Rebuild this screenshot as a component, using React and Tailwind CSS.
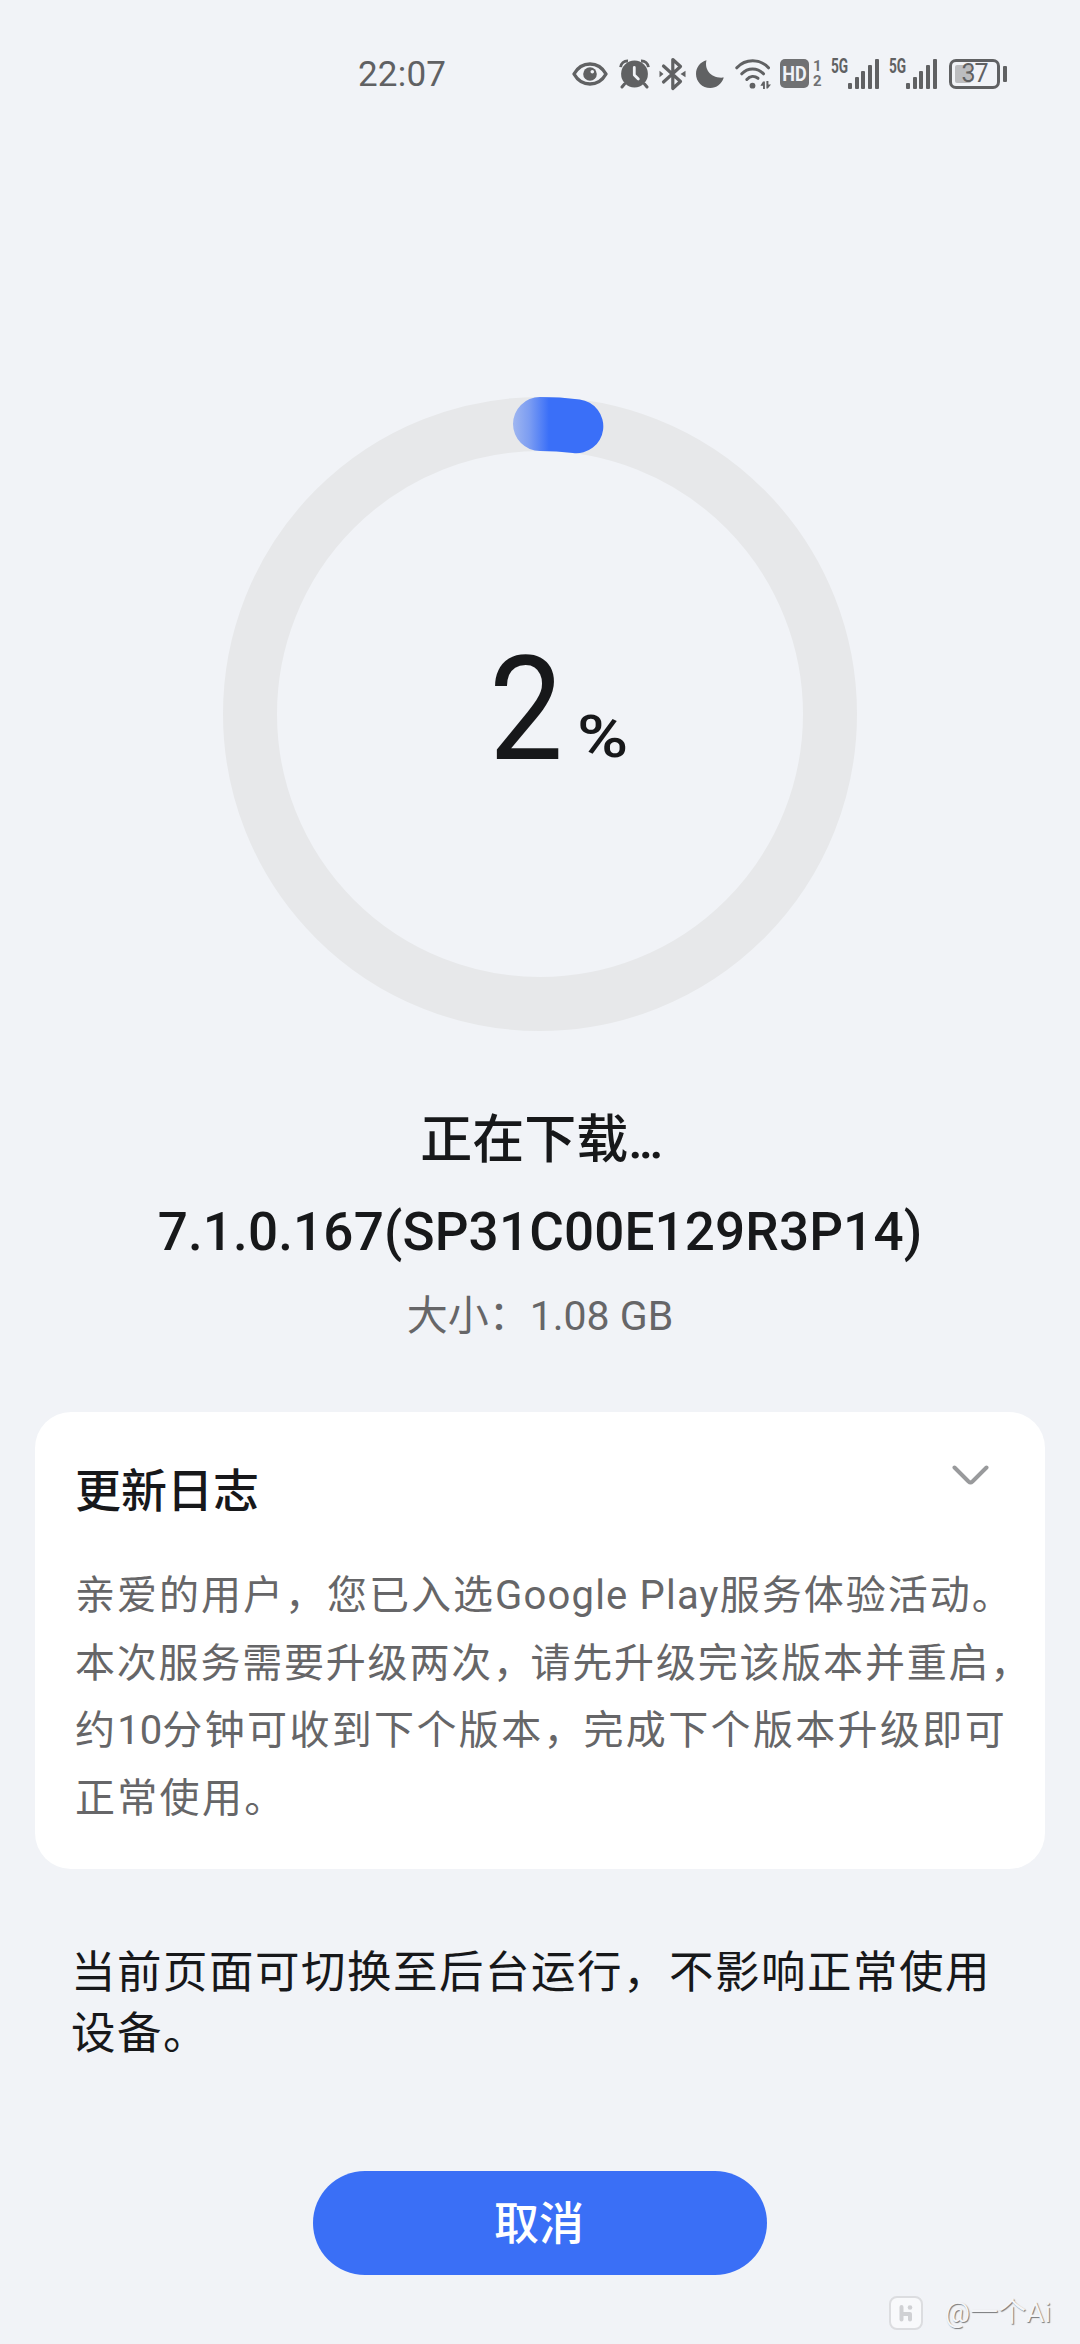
import React from 'react';

const RADIUS = 290;
const CIRCUMFERENCE = 2 * Math.PI * RADIUS;

const EyeIcon = () => (
  <svg className="w-9 h-6" viewBox="0 0 36 24" fill="none">
    <path d="M2 12C6 5 12 2 18 2s12 3 16 10c-4 7-10 10-16 10S6 19 2 12z" stroke="#606163" strokeWidth="3.4" strokeLinejoin="round" />
    <circle cx="18" cy="12" r="6.8" fill="#606163" />
    <circle cx="20.3" cy="9.8" r="1.8" fill="#f1f3f7" />
  </svg>
);

const AlarmIcon = () => (
  <svg className="w-[31px] h-[30px]" viewBox="0 0 31 30" fill="none">
    <circle cx="15.5" cy="15" r="13.4" fill="#606163" />
    <path d="M1.6 8.2C2 4.5 5 1.8 9 2M29.4 8.2C29 4.5 26 1.8 22 2" stroke="#606163" strokeWidth="2.8" />
    <path d="M5.5 25L3 28M25.5 25L28 28" stroke="#606163" strokeWidth="3" strokeLinecap="round" />
    <path d="M15.3 8.5v7.5l4 4" stroke="#f1f3f7" strokeWidth="2.8" strokeLinecap="round" strokeLinejoin="round" />
  </svg>
);

const BluetoothIcon = () => (
  <svg className="w-[27px] h-[34px]" viewBox="0 0 27 34" fill="none">
    <path d="M4.5 9L21.5 24.5L13.8 31.5V2.5L21.5 9.5L4.5 25" stroke="#606163" strokeWidth="3.2" strokeLinecap="round" strokeLinejoin="round" />
    <path d="M.5 13.8v6.4L4.5 17zM26.5 13.8v6.4L21.5 17z" fill="#606163" />
  </svg>
);

const MoonIcon = () => (
  <svg className="w-7 h-7" viewBox="0 0 28 28">
    <path d="M10.5 0.3C8.2 9 14.5 19 27.8 17.6C25.5 24.5 20.5 28 14.3 28C6.2 28 0 21.8 0 14C0 7.5 4.2 2 10.5 0.3z" fill="#606163" />
  </svg>
);

const WifiIcon = () => (
  <svg className="w-9 h-[30px]" viewBox="0 0 36 30" fill="none">
    <g stroke="#606163" strokeWidth="3" strokeLinecap="round">
      <path d="M1.8 8.8C10.5 -0.5 25 -0.5 33.5 8.8" />
      <path d="M6.8 14.8C12.8 8.3 22.5 8.3 28.5 14.8" />
      <path d="M11.8 20.5C15 16.8 19.5 16.6 23 19.3" />
    </g>
    <circle cx="17.5" cy="26.7" r="2.9" fill="#606163" />
    <path d="M28 22.5h1.9V30H28v-3.2h-2.6zM31.4 22v7.5h1.4L36 25.4h-2.6V22z" fill="#606163" />
  </svg>
);

const SignalIcon = () => (
  <div className="flex items-end gap-[2.8px] h-[30px]">
    <span className="w-1 h-[6px] rounded-[1px] bg-[#606163]" />
    <span className="w-1 h-[12px] rounded-[1px] bg-[#606163]" />
    <span className="w-1 h-[18px] rounded-[1px] bg-[#606163]" />
    <span className="w-1 h-[24px] rounded-[1px] bg-[#606163]" />
    <span className="w-1 h-[30px] rounded-[1px] bg-[#606163]" />
  </div>
);

const Cellular = () => (
  <div className="flex w-[48px] h-[30px] justify-between">
    <span className="w-[16px] h-4 text-[19.5px] leading-[16px] font-bold origin-left scale-x-[0.7]">5G</span>
    <SignalIcon />
  </div>
);

const StatusBar = () => (
  <header className="flex items-center h-[147px] pl-[358px] text-[#606163]">
    <span className="w-[214px] pt-[2px] text-[35px] leading-none tracking-[0.2px]">22:07</span>
    <EyeIcon />
    <div className="ml-[11px]"><AlarmIcon /></div>
    <div className="ml-[9px]"><BluetoothIcon /></div>
    <div className="ml-[10px]"><MoonIcon /></div>
    <div className="ml-[11px]"><WifiIcon /></div>
    <span className="flex items-center justify-center ml-[9px] w-[29px] h-[29px] rounded-[5px] bg-[#707173] text-[#f1f3f7] text-[20px] font-bold leading-none">
      <span className="scale-x-[0.9]">HD</span>
    </span>
    <div className="flex flex-col justify-between w-[10px] h-[28px] ml-1 text-[15px] leading-[13px] font-bold text-[#707173]">
      <span>1</span>
      <span>2</span>
    </div>
    <div className="ml-[8px]"><Cellular /></div>
    <div className="ml-[10px]"><Cellular /></div>
    <div className="flex items-center ml-[12px]">
      <div className="relative flex items-center justify-center w-[51px] h-[30px] rounded-[7px] border-[3px] border-[#606163]">
        <span className="absolute left-[3px] top-[3px] w-4 h-[18px] rounded-[2px] bg-[#bcbdc0]" />
        <span className="relative text-[25px] leading-none tracking-[-1px]">37</span>
      </div>
      <span className="w-1 h-4 ml-[3px] rounded-[1px] bg-[#606163]" />
    </div>
  </header>
);

const ProgressRing = ({ percent }) => (
  <div className="relative w-[634px] h-[634px] mt-[250px]">
    <svg className="w-full h-full" viewBox="-317 -317 634 634" fill="none">
      <defs>
        <linearGradient id="arc" gradientUnits="userSpaceOnUse" x1="-27" y1="0" x2="9" y2="0">
          <stop offset="0" stopColor="#9fb6f0" />
          <stop offset="0.45" stopColor="#7c9df2" />
          <stop offset="1" stopColor="#3a6ff8" />
        </linearGradient>
      </defs>
      <circle r={RADIUS} stroke="#e7e8ea" strokeWidth="54" />
      <path
        d={`M0 -${RADIUS}A${RADIUS} ${RADIUS} 0 1 1 -0.01 -${RADIUS}`}
        stroke="url(#arc)"
        strokeWidth="54"
        strokeLinecap="round"
        strokeDasharray={`${(CIRCUMFERENCE * percent) / 100} ${CIRCUMFERENCE}`}
      />
    </svg>
    <div className="absolute inset-0 flex items-baseline justify-center pl-[30px] pt-[227px] text-[#17181a]">
      <span className="text-[145px] leading-[170px] origin-left scale-x-[0.91]">{percent}</span>
      <span className="ml-[7px] text-[60px] font-medium origin-left scale-x-[1.16] -translate-y-[2px]">%</span>
    </div>
  </div>
);

const UpdateLog = () => (
  <section className="w-[1010px] h-[457px] mt-[66px] pl-[40px] rounded-[36px] bg-white">
    <div className="flex justify-between pt-[49px] pr-[56px]">
      <h2 className="text-[46px] leading-[60px] font-medium text-[#17181a]">更新日志</h2>
      <svg className="w-[37px] h-5 mt-[4px]" viewBox="0 0 37 20" fill="none">
        <path d="M2.5 2.5L16.5 16.5Q18.5 18.3 20.5 16.5L34.5 2.5" stroke="#999a9c" strokeWidth="4" strokeLinecap="round" />
      </svg>
    </div>
    <div className="mt-[41px] text-[40px] leading-[67.6px] text-[#666668] whitespace-nowrap">
      <p className="tracking-[2px]">
        亲爱的用户，您已入选<span className="tracking-[1.2px]">Google Play</span>服务体验活动。
      </p>
      <p className="tracking-[1.8px]">
        本次服务需要升级两次<span className="tracking-[-2.5px]">，</span>请先升级完该版本并重启，
      </p>
      <p className="tracking-[2.35px]">
        约<span className="tracking-normal">10</span>分钟可收到下个版本<span className="tracking-normal">，</span>完成下个版本升级即可
      </p>
      <p className="tracking-[2.3px]">正常使用。</p>
    </div>
  </section>
);

const Watermark = () => (
  <div className="flex items-center self-end h-[34px] mt-[21px] mr-[29px]">
    <svg className="w-[34px] h-[34px]" viewBox="0 0 34 34" fill="none">
      <rect x="1" y="1" width="32" height="32" rx="7" fill="#f8f9fb" stroke="#dcdde0" strokeWidth="2" />
      <path d="M12.5 11v12.5M12.5 18h8.5v5.5" stroke="#d0d1d4" strokeWidth="4" strokeLinecap="round" strokeLinejoin="round" />
      <circle cx="21" cy="11.5" r="2.3" fill="#d0d1d4" />
    </svg>
    <span className="ml-[22px] text-[28px] leading-[34px] text-[#f4f5f8] [text-shadow:1px_1px_1px_#77787a] whitespace-nowrap">@一个Ai</span>
  </div>
);

const App = () => (
  <main
    lang="zh-CN"
    className="flex flex-col items-center w-[1080px] h-[2344px] overflow-hidden bg-[#f1f3f7] font-['Roboto','Noto_Sans_CJK_SC',sans-serif] text-[#17181a]"
  >
    <div className="w-full">
      <StatusBar />
    </div>
    <ProgressRing percent={2} />
    <h1 className="mt-[80px] text-[52px] leading-[60px] font-medium">
      正在下载<span className="tracking-[-4px]">...</span>
    </h1>
    <p className="mt-[31px] text-[53px] leading-[60px] font-medium tracking-[0.15px] whitespace-nowrap">
      7.1.0.167(SP31C00E129R3P14)
    </p>
    <p className="mt-[24px] text-[41px] leading-[60px] text-[#666668]">大小：1.08 GB</p>
    <UpdateLog />
    <p className="w-[938px] mt-[74px] text-[44.5px] leading-[61.3px] tracking-[1.5px]">
      当前页面可切换至后台运行，不影响正常使用设备。
    </p>
    <button type="button" className="w-[454px] h-[104px] mt-[105px] pt-[5px] pr-[2px] rounded-full bg-[#3a6ff6] text-[45px] font-medium text-white">
      取消
    </button>
    <Watermark />
  </main>
);

export default App;
